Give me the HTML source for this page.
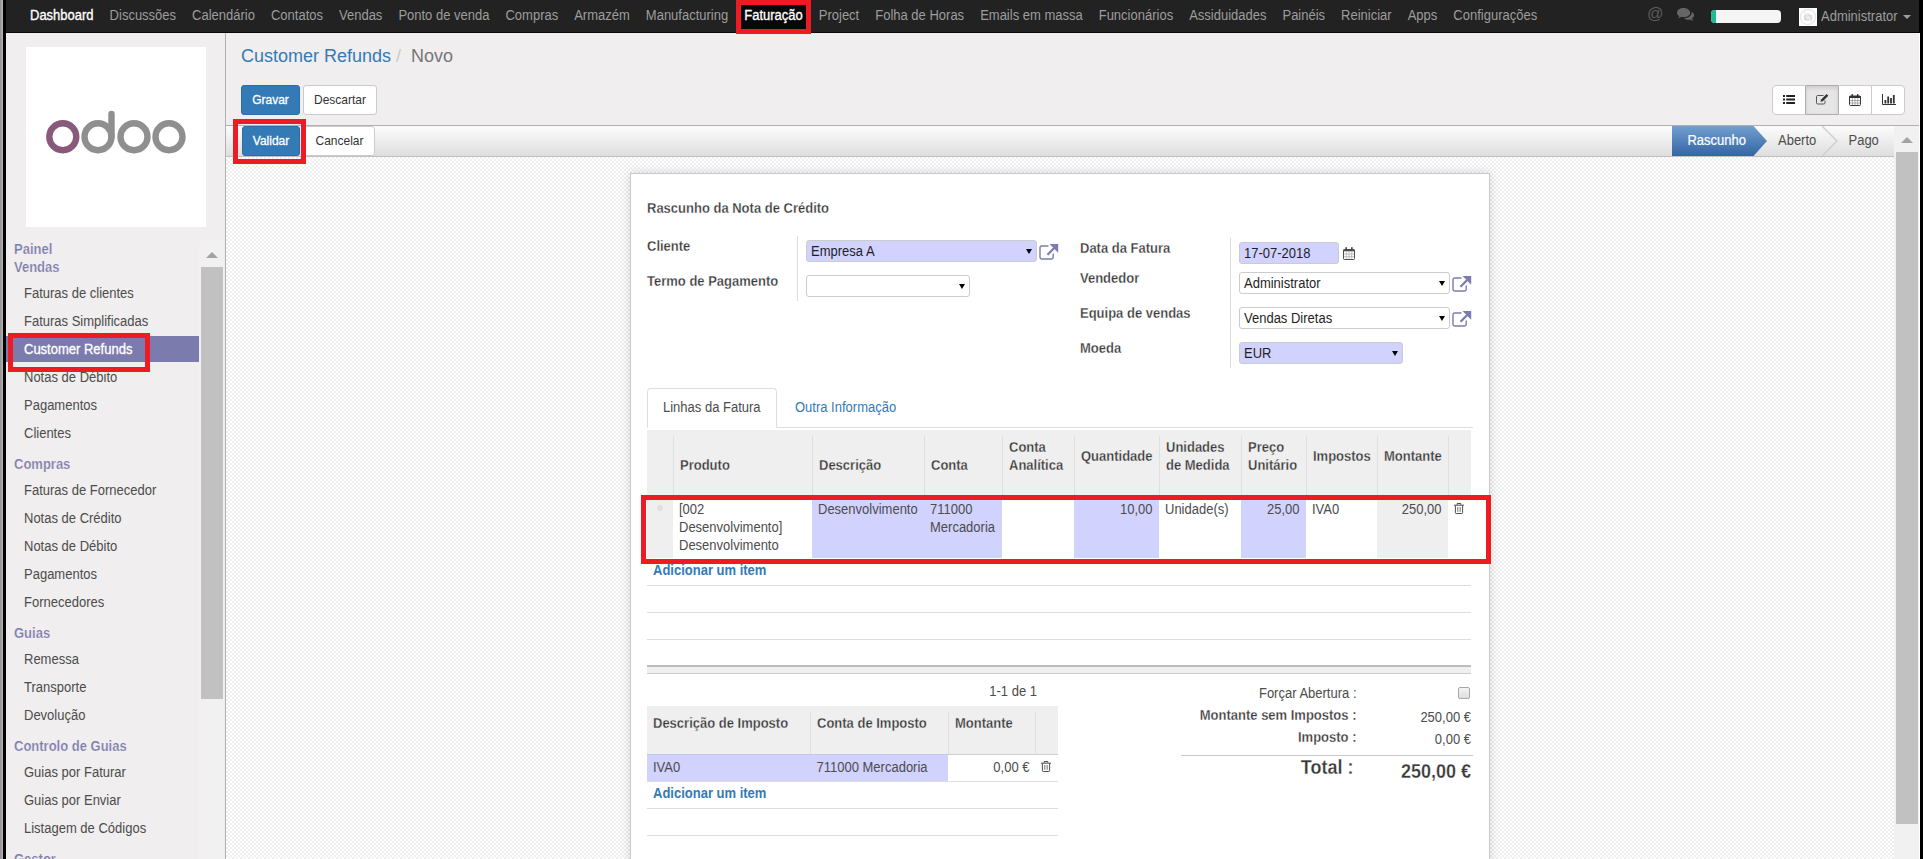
<!DOCTYPE html>
<html lang="pt">
<head>
<meta charset="utf-8">
<title>Customer Refunds - Odoo</title>
<style>
*{box-sizing:border-box}
html,body{margin:0;padding:0}
body{width:1923px;height:859px;overflow:hidden;position:relative;background:#f0eeee;font-family:"Liberation Sans",Arial,sans-serif;font-size:13px;color:#4c4c4c;line-height:18px}
.abs{position:absolute}
#lstrip{left:0;top:0;width:3px;height:859px;background:linear-gradient(90deg,#8f8f8f,#b9b9b9)}
#lblack{left:3px;top:0;width:3px;height:859px;background:#000}
#rblack{left:1919px;top:0;width:4px;height:859px;background:#000}
#rwhite{left:1919px;top:33px;width:1px;height:826px;background:#fff}
#nav{left:6px;top:0;width:1913px;height:33px;background:#222;border-bottom:1px solid #080808}
#nav .mi{position:absolute;top:0;height:32px;line-height:32px;font-size:13px;color:#9d9d9d;white-space:nowrap}
#nav .mi.act{color:#fff}
#side{left:6px;top:33px;width:219px;height:826px;background:#f0eeee}
#sideborder{left:225px;top:33px;width:1px;height:826px;background:#afafb6}
#logo{left:26px;top:47px;width:180px;height:180px;background:#fff}
.sec{position:absolute;left:14px;font-weight:bold;color:#7c7bad;font-size:13px;white-space:nowrap}
.it{position:absolute;left:24px;color:#4c4c4c;font-size:13px;white-space:nowrap}
.red{position:absolute;border:5px solid #ed1c24}
.btn{position:absolute;font-size:12px;line-height:18px;text-align:center;border-radius:3px;white-space:nowrap}
.btn.pri{background:#337ab7;border:1px solid #2e6da4;color:#fff}
.btn.def{background:#fff;border:1px solid #ccc;color:#333}

#menu{position:absolute;left:16px;top:0;height:32px;white-space:nowrap;font-size:0}
#menu .m{display:inline-block;padding:0 8px;line-height:31px;height:32px;font-size:13px;color:#9d9d9d;vertical-align:top}
#menu .m.act{color:#fff}
#n9{background:#080808}
#at{left:1641px;top:0;font-size:16.300px;line-height:27px;color:#5c5c5c}
#chat{left:1671px;top:8px}
#prog{left:1705px;top:10px;width:70px;height:13px;border-radius:4px;background:#f5f5f5;overflow:hidden}
#prog i{display:block;width:5px;height:13px;background:#1fb899}
#avatar{left:1793px;top:8px;width:18px;height:18px;background:#fff}
#avatar svg{display:block}
#adm{left:1815px;top:0;line-height:33px;font-size:13px;color:#9d9d9d}
#caret{left:1897px;top:15px;width:0;height:0;border-left:4px solid transparent;border-right:4px solid transparent;border-top:4px solid #9d9d9d}

#logo svg{display:block}
#actbg{left:6px;top:336px;width:193px;height:26px;background:#7c7bad}
.it.act{color:#fff}
#sbtrack{left:199px;top:241px;width:25px;height:618px;background:#f1f1f1}
#sbthumb{left:201px;top:267px;width:22px;height:432px;background:#c1c1c1}
#sbarrow{left:206px;top:252px;width:0;height:0;border-left:6px solid transparent;border-right:6px solid transparent;border-bottom:6px solid #a3a3a3}

#bc{left:241px;top:43px;font-size:18px;line-height:26px;white-space:nowrap}
#bc .l{color:#337ab7}#bc .sl{color:#ccc;padding:0 5px 0 5px}#bc .c{color:#777;padding-left:5px}
#vs{left:1772px;top:85px;width:133px;height:30px;border:1px solid #ccc;border-radius:4px;background:#fff}
#vs .vb{position:absolute;top:0;width:33px;height:28px;border-right:1px solid #ccc;display:flex;align-items:center;justify-content:center}
#vs .vb.on{background:#e6e6e6;box-shadow:inset 0 2px 4px rgba(0,0,0,.12);border-right-color:#adadad}
#stbar{left:226px;top:125px;width:1693px;height:32px;border-top:1px solid #afafb6;border-bottom:1px solid #bfbfc4;background:linear-gradient(#fcfcfc,#dedede)}
#stsvg{left:1672px;top:126px}
#msb{left:1894px;top:126px;width:25px;height:733px;background:#f1f1f1}
#msbthumb{left:1896px;top:152px;width:22px;height:672px;background:#c1c1c1}
#msbarrow{left:1901px;top:137px;width:0;height:0;border-left:6px solid transparent;border-right:6px solid transparent;border-bottom:6px solid #a3a3a3}
#sheetbg{left:226px;top:157px;width:1668px;height:702px;background-color:#fff;background-image:linear-gradient(45deg,#efefef 25%,transparent 25%,transparent 75%,#efefef 75%),linear-gradient(45deg,#efefef 25%,transparent 25%,transparent 75%,#efefef 75%);background-size:4px 4px;background-position:0 0,2px 2px}
#sheet{left:630px;top:173px;width:860px;height:700px;background:#fff;border:1px solid #c8c8d3;box-shadow:0 0 10px rgba(0,0,0,.15)}

.t{position:absolute;white-space:nowrap;line-height:18px;font-size:13px;color:#4c4c4c}
.t.b{font-weight:bold}
.t.lnk{color:#337ab7}
.inp{position:absolute;border:1px solid #ccc;border-radius:3px;background:#fff;font-size:13px;line-height:20px;color:#1f1f1f;white-space:nowrap}
.inp.pu{background:#d2d2ff}
.inp span{position:absolute;left:4px;top:1px}
.inp i{position:absolute;right:4px;top:8px;width:0;height:0;border-left:3.500px solid transparent;border-right:3.500px solid transparent;border-top:5.500px solid #000}

.t,.it,.sec{transform:scaleY(1.080);transform-origin:0 13.500px}
#menu .m{transform:scaleY(1.080);transform-origin:0 20px}
#adm{transform:scaleY(1.080);transform-origin:0 21px}
.sy{display:inline-block;transform:scaleY(1.080);transform-origin:0 19px}
.inp span{transform:scaleY(1.080);transform-origin:0 14px}

#menu .m.act,.btn.pri .sy,.it.act{-webkit-text-stroke:.3px #fff}

.t.b{-webkit-text-stroke:.25px #fff;color:#383838}
.t.b.h{-webkit-text-stroke:.25px #efefef}
.sec{-webkit-text-stroke:.2px #f0eeee}
.t.b.lnk{color:#337ab7;-webkit-text-stroke:0}
</style>
</head>
<body>
<div id="lstrip" class="abs"></div>
<div id="lblack" class="abs"></div>
<div id="rblack" class="abs"></div>
<div id="nav" class="abs">
<div id="menu"><span class="m act" id="n0">Dashboard</span><span class="m" id="n1">Discussões</span><span class="m" id="n2">Calendário</span><span class="m" id="n3">Contatos</span><span class="m" id="n4">Vendas</span><span class="m" id="n5">Ponto de venda</span><span class="m" id="n6">Compras</span><span class="m" id="n7">Armazém</span><span class="m" id="n8">Manufacturing</span><span class="m act" id="n9">Faturação</span><span class="m" id="n10">Project</span><span class="m" id="n11">Folha de Horas</span><span class="m" id="n12">Emails em massa</span><span class="m" id="n13">Funcionários</span><span class="m" id="n14">Assiduidades</span><span class="m" id="n15">Painéis</span><span class="m" id="n16">Reiniciar</span><span class="m" id="n17">Apps</span><span class="m" id="n18">Configurações</span></div>
<span class="abs" id="at">@</span>
<svg class="abs" id="chat" width="17" height="13.200" viewBox="0 0 18 14"><path fill="#666" d="M7 0C3.1 0 0 2.2 0 5c0 1.5.9 2.8 2.4 3.7-.2.8-.7 1.500-1.400 2.100 1.300-.1 2.600-.600 3.600-1.400.8.200 1.600.300 2.400.300 3.900 0 7-2.200 7-4.700S10.900 0 7 0z"/><path fill="#666" d="M15.600 11.200c1.500-.9 2.400-2.200 2.400-3.600 0-1.500-1-2.900-2.600-3.700.1.400.2.700.2 1.100 0 3.200-3.600 5.700-8 5.800 1.200 1.100 3.100 1.800 5.200 1.800.6 0 1.200-.1 1.800-.2.900.7 2 1.200 3.200 1.300-.9-.8-1.800-1.600-2.200-2.500z"/></svg>
<div class="abs" id="prog"><i></i></div>
<div class="abs" id="avatar"><svg width="18" height="18" viewBox="0 0 18 18"><circle cx="9" cy="9" r="7.600" fill="none" stroke="#e6e6e6" stroke-width="1.200"/><rect x="5" y="6.800" width="8.200" height="5.600" rx=".8" fill="#dcdcdc"/><rect x="7.500" y="5.800" width="3" height="1.500" fill="#dcdcdc"/><circle cx="9.100" cy="9.600" r="1.700" fill="#f1f1f1"/><path d="M4 2.800L14 15.200" stroke="#ececec" stroke-width="1.300"/></svg></div>
<span class="abs" id="adm">Administrator</span>
<i class="abs" id="caret"></i>
</div>
<div id="side" class="abs"></div>
<div id="sideborder" class="abs"></div>
<div id="logo" class="abs"><svg width="180" height="180" viewBox="0 0 180 180"><g fill="none" stroke-width="6.400">
<circle cx="36.800" cy="89.800" r="13.500" stroke="#875a7b"/>
<circle cx="72" cy="89.800" r="13.500" stroke="#8f8f8f"/>
<path d="M85.500 89.800V67" stroke="#8f8f8f" stroke-linecap="round"/>
<circle cx="108" cy="89.800" r="13.500" stroke="#8f8f8f"/>
<circle cx="143" cy="89.800" r="13.500" stroke="#8f8f8f"/>
</g></svg></div>
<div class="abs" id="actbg"></div>
<div class="sec" style="top:241px">Painel</div>
<div class="sec" style="top:259px">Vendas</div>
<div class="sec" style="top:456px">Compras</div>
<div class="sec" style="top:625px">Guias</div>
<div class="sec" style="top:738px">Controlo de Guias</div>
<div class="sec" style="top:851px">Gestor</div>
<div class="it" style="top:285px">Faturas de clientes</div>
<div class="it" style="top:313px">Faturas Simplificadas</div>
<div class="it act" style="top:341px">Customer Refunds</div>
<div class="it" style="top:369px">Notas de Débito</div>
<div class="it" style="top:397px">Pagamentos</div>
<div class="it" style="top:425px">Clientes</div>
<div class="it" style="top:482px">Faturas de Fornecedor</div>
<div class="it" style="top:510px">Notas de Crédito</div>
<div class="it" style="top:538px">Notas de Débito</div>
<div class="it" style="top:566px">Pagamentos</div>
<div class="it" style="top:594px">Fornecedores</div>
<div class="it" style="top:651px">Remessa</div>
<div class="it" style="top:679px">Transporte</div>
<div class="it" style="top:707px">Devolução</div>
<div class="it" style="top:764px">Guias por Faturar</div>
<div class="it" style="top:792px">Guias por Enviar</div>
<div class="it" style="top:820px">Listagem de Códigos</div>
<div class="abs" id="sbtrack"></div><div class="abs" id="sbthumb"></div><i class="abs" id="sbarrow"></i>


<div class="abs" id="bc"><span class="l">Customer Refunds</span><span class="sl">/</span><span class="c">Novo</span></div>
<div class="btn pri" style="left:241px;top:85px;width:59px;height:30px;line-height:28px"><span class="sy">Gravar</span></div>
<div class="btn def" style="left:303px;top:85px;width:74px;height:30px;line-height:28px"><span class="sy">Descartar</span></div>
<div class="abs" id="vs">
<div class="vb" style="left:0;border-right-color:#adadad"><svg style="margin-top:-1px" width="12" height="9" viewBox="0 0 12 9"><g fill="#222"><rect x="0" y="0" width="2" height="2"/><rect x="3.200" y="0" width="8.800" height="2"/><rect x="0" y="3.500" width="2" height="2"/><rect x="3.200" y="3.500" width="8.800" height="2"/><rect x="0" y="7" width="2" height="2"/><rect x="3.200" y="7" width="8.800" height="2"/></g></svg></div>
<div class="vb on" style="left:33px"><svg style="margin-top:-2px" width="13" height="11" viewBox="0 0 13 11"><path d="M9 6.500V8.800a1.200 1.200 0 0 1-1.200 1.200H1.700A1.200 1.200 0 0 1 .5 8.800V2.700a1.200 1.200 0 0 1 1.200-1.200H7.500" fill="none" stroke="#555" stroke-width="1"/><path d="M4.500 7.800l.6-2.300L10.600 0l1.700 1.700L6.800 7.200z" fill="#333"/></svg></div>
<div class="vb" style="left:66px"><svg width="12" height="12" viewBox="0 0 12 12"><rect x=".5" y="2" width="11" height="9.500" rx="1" fill="#fff" stroke="#333"/><rect x=".5" y="2" width="11" height="2" fill="#333"/><path d="M.5 6.500h11M.5 9h11M3.300 4v7.500M6 4v7.500M8.700 4v7.500" stroke="#666" stroke-width=".5"/><rect x="2.500" y="0" width="1.600" height="3" rx=".8" fill="#333"/><rect x="7.900" y="0" width="1.600" height="3" rx=".8" fill="#333"/></svg></div>
<div class="vb" style="left:99px;border-right:0;width:32px"><svg style="margin:-1px 0 0 2px" width="14" height="11" viewBox="0 0 14 11"><path d="M.5 0v10.500H14" fill="none" stroke="#333"/><rect x="2.500" y="6" width="1.800" height="3.500" fill="#333"/><rect x="5.300" y="2.500" width="1.800" height="7" fill="#333"/><rect x="8.100" y="4" width="1.800" height="5.500" fill="#333"/><rect x="10.900" y="1" width="1.800" height="8.500" fill="#333"/></svg></div>
<div class="abs" style="left:33px;top:-1px;width:32px;height:1px;background:#adadad"></div><div class="abs" style="left:33px;top:28px;width:32px;height:1px;background:#adadad"></div>
</div>
<div class="abs" id="stbar"></div>
<div class="btn pri" style="left:242px;top:126px;width:58px;height:30px;line-height:28px"><span class="sy">Validar</span></div>
<div class="btn def" style="left:304px;top:126px;width:71px;height:30px;line-height:28px"><span class="sy">Cancelar</span></div>
<svg class="abs" id="stsvg" width="222" height="30" viewBox="0 0 222 30">
<defs><linearGradient id="gb" x1="0" y1="0" x2="0" y2="1"><stop offset="0" stop-color="#729fcf"/><stop offset="1" stop-color="#3465a4"/></linearGradient></defs>
<path d="M0 0H81.500L95 15L81.500 30H0z" fill="url(#gb)"/>
<path d="M150 0L165 15L150 30" fill="none" stroke="#d0d0d0" stroke-width="1.500"/>
<text transform="matrix(1 0 0 1.080 0 -1.560)" x="15.500" y="19.500" font-size="13" fill="#fff" stroke="#fff" stroke-width=".2" font-family="Liberation Sans, Arial, sans-serif">Rascunho</text>
<text transform="matrix(1 0 0 1.080 0 -1.560)" x="106" y="19.500" font-size="13" fill="#4c4c4c" font-family="Liberation Sans, Arial, sans-serif">Aberto</text>
<text transform="matrix(1 0 0 1.080 0 -1.560)" x="176.500" y="19.500" font-size="13" fill="#4c4c4c" font-family="Liberation Sans, Arial, sans-serif">Pago</text>
</svg>
<div class="abs" id="msb"></div><div class="abs" id="msbthumb"></div><i class="abs" id="msbarrow"></i>
<div class="abs" id="rwhite"></div>
<div class="abs" id="sheetbg"></div>
<div class="abs" id="sheet"></div>
<div class="t b" style="left:647px;top:200px;">Rascunho da Nota de Crédito</div>
<div class="t b" style="left:647px;top:238px;">Cliente</div>
<div class="t b" style="left:647px;top:273px;">Termo de Pagamento</div>
<div class="abs" style="left:797px;top:236px;width:1px;height:65px;background:#ddd;"></div>
<div class="inp pu" style="left:806px;top:240px;width:231px;height:22px"><span>Empresa A</span><i></i></div>
<svg class="abs" style="left:1039px;top:243px" width="20" height="18" viewBox="0 0 20 18"><path d="M14.200 11v3.300a1.700 1.700 0 0 1-1.700 1.700H2.700A1.700 1.700 0 0 1 1 14.300V4.700A1.700 1.700 0 0 1 2.700 3H9" fill="none" stroke="#7c7bad" stroke-width="1.400" stroke-linecap="round"/><path d="M10.500 1H19.200V9.700z" fill="#7c7bad"/><path d="M15.200 5L8.500 11.700" stroke="#7c7bad" stroke-width="2.300"/></svg>
<div class="inp" style="left:806px;top:275px;width:164px;height:22px"><span></span><i></i></div>
<div class="t b" style="left:1080px;top:240px;">Data da Fatura</div>
<div class="t b" style="left:1080px;top:270px;">Vendedor</div>
<div class="t b" style="left:1080px;top:305px;">Equipa de vendas</div>
<div class="t b" style="left:1080px;top:340px;">Moeda</div>
<div class="abs" style="left:1230px;top:238px;width:1px;height:130px;background:#ddd;"></div>
<div class="inp pu" style="left:1239px;top:242px;width:100px;height:22px"><span>17-07-2018</span></div>
<svg class="abs" style="left:1343px;top:247px" width="12" height="13" viewBox="0 0 12 13"><rect x=".5" y="2.500" width="11" height="10" rx=".8" fill="#fff" stroke="#4c4c4c"/><rect x=".5" y="2.500" width="11" height="1.800" fill="#4c4c4c"/><path d="M.5 7h11M.5 9.700h11M3.300 4.500v8M6 4.500v8M8.700 4.500v8" stroke="#8a8a8a" stroke-width=".5"/><rect x="2.300" y="0" width="1.700" height="3.300" rx=".8" fill="#4c4c4c"/><rect x="8" y="0" width="1.700" height="3.300" rx=".8" fill="#4c4c4c"/></svg>
<div class="inp" style="left:1239px;top:272px;width:211px;height:22px"><span>Administrator</span><i></i></div>
<svg class="abs" style="left:1452px;top:275px" width="20" height="18" viewBox="0 0 20 18"><path d="M14.200 11v3.300a1.700 1.700 0 0 1-1.700 1.700H2.700A1.700 1.700 0 0 1 1 14.300V4.700A1.700 1.700 0 0 1 2.700 3H9" fill="none" stroke="#7c7bad" stroke-width="1.400" stroke-linecap="round"/><path d="M10.500 1H19.200V9.700z" fill="#7c7bad"/><path d="M15.200 5L8.500 11.700" stroke="#7c7bad" stroke-width="2.300"/></svg>
<div class="inp" style="left:1239px;top:307px;width:211px;height:22px"><span>Vendas Diretas</span><i></i></div>
<svg class="abs" style="left:1452px;top:310px" width="20" height="18" viewBox="0 0 20 18"><path d="M14.200 11v3.300a1.700 1.700 0 0 1-1.700 1.700H2.700A1.700 1.700 0 0 1 1 14.300V4.700A1.700 1.700 0 0 1 2.700 3H9" fill="none" stroke="#7c7bad" stroke-width="1.400" stroke-linecap="round"/><path d="M10.500 1H19.200V9.700z" fill="#7c7bad"/><path d="M15.200 5L8.500 11.700" stroke="#7c7bad" stroke-width="2.300"/></svg>
<div class="inp pu" style="left:1239px;top:342px;width:164px;height:22px"><span>EUR</span><i></i></div>
<div class="abs" style="left:647px;top:427px;width:826px;height:1px;background:#ddd;"></div>
<div class="abs" style="left:647px;top:388px;width:130px;height:40px;border:1px solid #ddd;border-bottom:1px solid #fff;border-radius:4px 4px 0 0;background:#fff"></div>
<div class="t " style="left:663px;top:399px;">Linhas da Fatura</div>
<div class="t lnk" style="left:795px;top:399px;">Outra Informação</div>
<div class="abs" style="left:647px;top:430px;width:824px;height:65px;background:#efefef;"></div>
<div class="abs" style="left:673px;top:436px;width:1px;height:59px;background:#dfdfdf;"></div>
<div class="abs" style="left:812px;top:436px;width:1px;height:59px;background:#dfdfdf;"></div>
<div class="abs" style="left:924px;top:436px;width:1px;height:59px;background:#dfdfdf;"></div>
<div class="abs" style="left:1002px;top:436px;width:1px;height:59px;background:#dfdfdf;"></div>
<div class="abs" style="left:1074px;top:436px;width:1px;height:59px;background:#dfdfdf;"></div>
<div class="abs" style="left:1159px;top:436px;width:1px;height:59px;background:#dfdfdf;"></div>
<div class="abs" style="left:1241px;top:436px;width:1px;height:59px;background:#dfdfdf;"></div>
<div class="abs" style="left:1306px;top:436px;width:1px;height:59px;background:#dfdfdf;"></div>
<div class="abs" style="left:1377px;top:436px;width:1px;height:59px;background:#dfdfdf;"></div>
<div class="abs" style="left:1448px;top:436px;width:1px;height:59px;background:#dfdfdf;"></div>
<div class="t b h" style="left:680px;top:457px;">Produto</div>
<div class="t b h" style="left:819px;top:457px;">Descrição</div>
<div class="t b h" style="left:931px;top:457px;">Conta</div>
<div class="t b h" style="left:1009px;top:439px;">Conta</div>
<div class="t b h" style="left:1009px;top:457px;">Analítica</div>
<div class="t b h" style="left:1081px;top:448px;">Quantidade</div>
<div class="t b h" style="left:1166px;top:439px;">Unidades</div>
<div class="t b h" style="left:1166px;top:457px;">de Medida</div>
<div class="t b h" style="left:1248px;top:439px;">Preço</div>
<div class="t b h" style="left:1248px;top:457px;">Unitário</div>
<div class="t b h" style="left:1313px;top:448px;">Impostos</div>
<div class="t b h" style="left:1384px;top:448px;">Montante</div>
<div class="abs" style="left:647px;top:495px;width:26px;height:63px;background:#efefef;"></div>
<div class="abs" style="left:657px;top:505px;width:6px;height:6px;border-radius:3px;background:#e0e0e0"></div>
<div class="abs" style="left:812px;top:495px;width:190px;height:63px;background:#d2d2ff;"></div>
<div class="abs" style="left:1074px;top:495px;width:85px;height:63px;background:#d2d2ff;"></div>
<div class="abs" style="left:1241px;top:495px;width:65px;height:63px;background:#d2d2ff;"></div>
<div class="abs" style="left:1377px;top:495px;width:71px;height:63px;background:#efefef;"></div>
<div class="t " style="left:679px;top:501px;">[002</div>
<div class="t " style="left:679px;top:519px;">Desenvolvimento]</div>
<div class="t " style="left:679px;top:537px;">Desenvolvimento</div>
<div class="t " style="left:818px;top:501px;">Desenvolvimento</div>
<div class="t " style="left:930px;top:501px;">711000</div>
<div class="t " style="left:930px;top:519px;">Mercadoria</div>
<div class="t r " style="right:770.5px;top:501px;">10,00</div>
<div class="t " style="left:1165px;top:501px;">Unidade(s)</div>
<div class="t r " style="right:623.5px;top:501px;">25,00</div>
<div class="t " style="left:1312px;top:501px;">IVA0</div>
<div class="t r " style="right:481.5px;top:501px;">250,00</div>
<svg class="abs" style="left:1454px;top:503px" width="10" height="11" viewBox="0 0 10 11"><path d="M0 2.200h10" stroke="#4c4c4c" stroke-width="1"/><path d="M3.200 1.800V.5h3.600V1.800" fill="none" stroke="#4c4c4c" stroke-width="1"/><path d="M1.400 2.500v7.200a.8.800 0 0 0 .8.800h5.600a.8.800 0 0 0 .8-.8V2.500" fill="none" stroke="#4c4c4c" stroke-width="1"/><path d="M3.500 4v4.800M5 4v4.800M6.500 4v4.800" stroke="#777" stroke-width=".7"/></svg>
<div class="t b lnk" style="left:653px;top:562px;">Adicionar um item</div>
<div class="abs" style="left:647px;top:585px;width:824px;height:1px;background:#ddd;"></div>
<div class="abs" style="left:647px;top:612px;width:824px;height:1px;background:#ddd;"></div>
<div class="abs" style="left:647px;top:639px;width:824px;height:1px;background:#ddd;"></div>
<div class="abs" style="left:647px;top:665px;width:824px;height:9px;background:#efefef;border-top:2px solid #bdbdbd;border-bottom:1px solid #ccc"></div>
<div class="t r " style="right:886px;top:683px;">1-1 de 1</div>
<div class="abs" style="left:647px;top:706px;width:411px;height:48px;background:#efefef;"></div>
<div class="abs" style="left:810px;top:712px;width:1px;height:42px;background:#dfdfdf;"></div>
<div class="abs" style="left:948px;top:712px;width:1px;height:42px;background:#dfdfdf;"></div>
<div class="abs" style="left:1035px;top:712px;width:1px;height:42px;background:#dfdfdf;"></div>
<div class="t b h" style="left:653px;top:715px;">Descrição de Imposto</div>
<div class="t b h" style="left:817px;top:715px;">Conta de Imposto</div>
<div class="t b h" style="left:955px;top:715px;">Montante</div>
<div class="abs" style="left:647px;top:754px;width:301px;height:27px;background:#d2d2ff;"></div>
<div class="abs" style="left:647px;top:754px;width:301px;height:1px;background:#c6c6ec"></div><div class="abs" style="left:948px;top:754px;width:110px;height:1px;background:#cfcfcf"></div>
<div class="abs" style="left:647px;top:781px;width:411px;height:1px;background:#ddd;"></div>
<div class="t " style="left:653px;top:759px;">IVA0</div>
<div class="t " style="left:816.5px;top:759px;">711000 Mercadoria</div>
<div class="t r " style="right:893.5px;top:759px;">0,00 €</div>
<svg class="abs" style="left:1041px;top:761px" width="10" height="11" viewBox="0 0 10 11"><path d="M0 2.200h10" stroke="#4c4c4c" stroke-width="1"/><path d="M3.200 1.800V.5h3.600V1.800" fill="none" stroke="#4c4c4c" stroke-width="1"/><path d="M1.400 2.500v7.200a.8.800 0 0 0 .8.800h5.600a.8.800 0 0 0 .8-.8V2.500" fill="none" stroke="#4c4c4c" stroke-width="1"/><path d="M3.500 4v4.800M5 4v4.800M6.500 4v4.800" stroke="#777" stroke-width=".7"/></svg>
<div class="t b lnk" style="left:653px;top:785px;">Adicionar um item</div>
<div class="abs" style="left:647px;top:808px;width:411px;height:1px;background:#ddd;"></div>
<div class="abs" style="left:647px;top:835px;width:411px;height:1px;background:#ddd;"></div>
<div class="t r " style="right:566.5px;top:685px;">Forçar Abertura :</div>
<div class="t r b" style="right:566.5px;top:707px;">Montante sem Impostos :</div>
<div class="t r b" style="right:566.5px;top:729px;">Imposto :</div>
<div class="abs" style="left:1458px;top:687px;width:12px;height:12px;border:1px solid #a9a9a9;border-radius:2px;background:linear-gradient(#f3f3f3,#dedede)"></div>
<div class="t r " style="right:452px;top:709px;">250,00 €</div>
<div class="t r " style="right:452px;top:731px;">0,00 €</div>
<div class="abs" style="left:1181px;top:755px;width:292px;height:1px;background:#cacaca;"></div>
<div class="t r b" style="right:569.5px;top:759px;font-size:18px">Total :</div>
<div class="t r b" style="right:452px;top:763px;font-size:18px">250,00 €</div>
<div class="red" style="left:641px;top:495px;width:850px;height:69px;border-width:5px"></div>
<div class="red" style="left:8px;top:333px;width:142px;height:39px"></div>
<div class="red" style="left:736px;top:0;width:75px;height:34px"></div>
<div class="red" style="left:233px;top:119px;width:73px;height:45px"></div>
</body>
</html>
